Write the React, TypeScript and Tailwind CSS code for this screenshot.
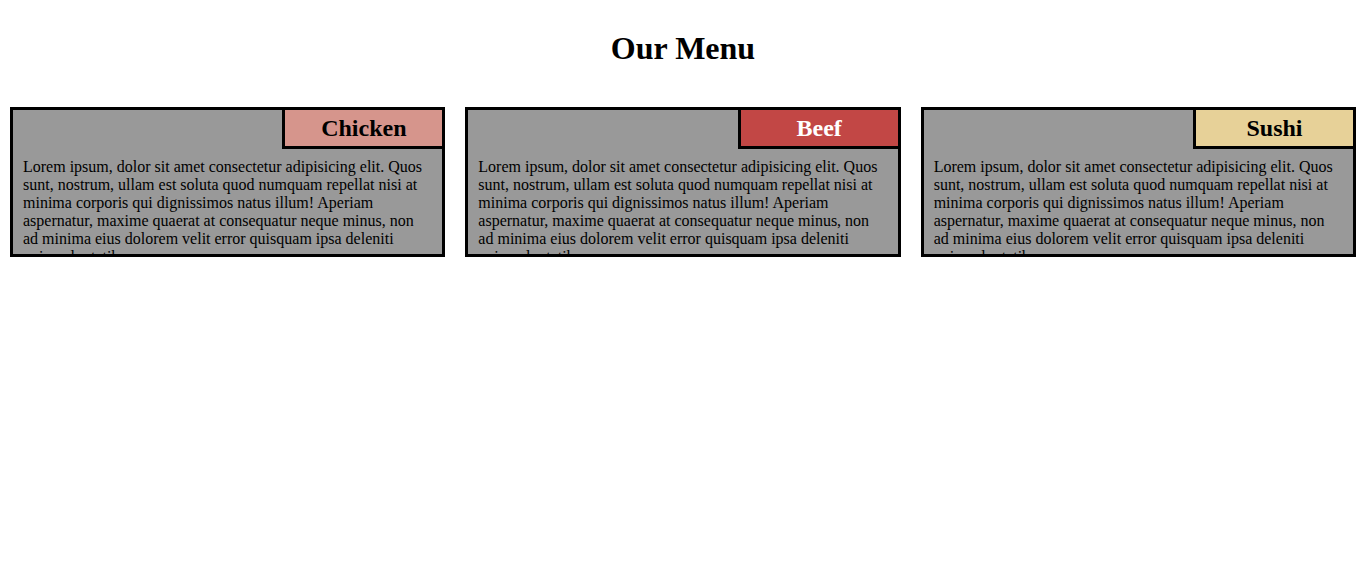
import React from "react";

const lorem =
  "Lorem ipsum, dolor sit amet consectetur adipisicing elit. Quos sunt, nostrum, ullam est soluta quod numquam repellat nisi at minima corporis qui dignissimos natus illum! Aperiam aspernatur, maxime quaerat at consequatur neque minus, non ad minima eius dolorem velit error quisquam ipsa deleniti quia voluptatibus.";

const items = [
  { name: "Chicken", bg: "bg-[#d6958c]", text: "text-black" },
  { name: "Beef", bg: "bg-[#c24745]", text: "text-white" },
  { name: "Sushi", bg: "bg-[#e7d198]", text: "text-black" },
];

export default function App() {
  return (
    <div className="min-h-[568px] bg-white text-black" style={{ fontFamily: '"Liberation Serif", "Times New Roman", serif' }}>
      <h1 className="pt-[30px] text-center text-[32px] font-bold leading-[37px]">Our Menu</h1>
      <div className="mt-[40px] grid grid-cols-3 gap-[20px] px-[10px]">
        {items.map((it) => (
          <div key={it.name} className="h-[150px] overflow-hidden border-[3px] border-black bg-[#999999]">
            <div className="flex justify-end">
              <div
                className={`w-[160px] h-[39px] border-l-[3px] border-b-[3px] border-black ${it.bg} ${it.text} flex items-center justify-center text-[24px] font-bold leading-[28px]`}
              >
                {it.name}
              </div>
            </div>
            <p className="pl-[10px] pr-[18px] pt-[9px] text-[16px] leading-[18px]">{lorem}</p>
          </div>
        ))}
      </div>
    </div>
  );
}
